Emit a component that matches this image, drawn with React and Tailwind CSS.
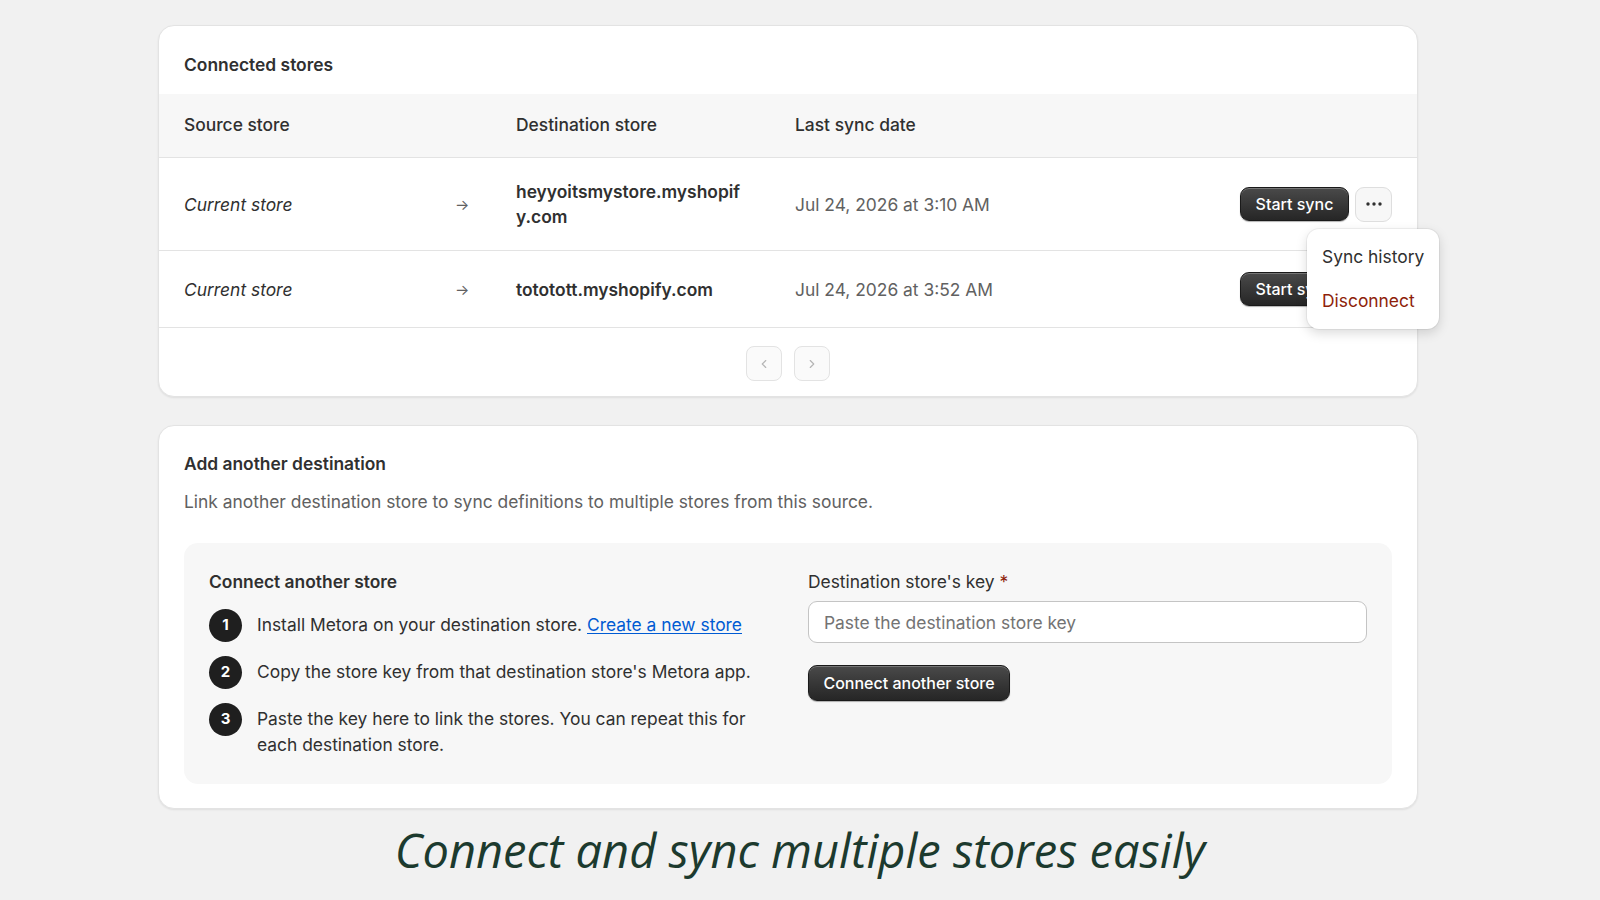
import { ChevronLeft, ChevronRight } from 'lucide-react';

const rows = [
  { dest: 'heyyoitsmystore.myshopify.com', date: 'Jul 24, 2026 at 3:10 AM', menu: true },
  { dest: 'tototott.myshopify.com', date: 'Jul 24, 2026 at 3:52 AM', menu: false },
];

const steps = [
  { n: '1', text: 'Install Metora on your destination store.', link: 'Create a new store' },
  { n: '2', text: "Copy the store key from that destination store's Metora app." },
  { n: '3', text: 'Paste the key here to link the stores. You can repeat this for each destination store.' },
];

function DarkButton({ children, className = '' }) {
  return (
    <button
      className={`relative z-0 rounded-[9px] border border-[#1a1a1a] bg-gradient-to-b from-[#4a4a4a] to-[#262626] text-white font-[550] shadow-[inset_0_1px_0_rgba(255,255,255,0.25),0_1px_1px_rgba(0,0,0,0.3)] ${className}`}>
      {children}
    </button>
  );
}

export default function App() {
  return (
    <div
      className="min-h-screen w-[1600px] h-[900px] overflow-hidden bg-[#f1f1f1] text-[#303030]"
      style={{ fontFamily: 'Inter, "Noto Sans", sans-serif' }}>
      <div className="ml-[158px] w-[1260px] pt-[25px]">
        {/* Connected stores */}
        <div className="rounded-[16px] border border-[#e3e3e3] bg-white shadow-[0_1px_2px_rgba(0,0,0,0.08)]">
          <h2 className="px-[25px] pt-[27px] pb-[17px] text-[17.4px] leading-[24px] font-semibold">Connected stores</h2>

          <div className="grid grid-cols-[256px_76px_279px_1fr] items-center h-[64px] px-[25px] bg-[#f7f7f7] border-b border-[#e3e3e3] text-[17.4px] font-medium">
            <div>Source store</div>
            <div></div>
            <div>Destination store</div>
            <div>Last sync date</div>
          </div>

          {rows.map((row) => (
            <div
              key={row.dest}
              className="grid grid-cols-[256px_76px_279px_1fr_auto] items-center py-[21px] px-[25px] border-b border-[#e3e3e3] text-[17.4px] leading-[25px]">
              <div className="italic">Current store</div>
              <div className="pl-[15px] text-[#616161] text-[15px]">→</div>
              <div className="w-[228px] break-all font-semibold">{row.dest}</div>
              <div className="text-[#616161]">{row.date}</div>
              <div className="flex items-center gap-[6px]">
                <DarkButton className="h-[34px] w-[109px] text-[16px]">Start sync</DarkButton>
                {row.menu ? (
                  <div className="relative">
                    <button className="flex h-[35px] w-[37px] items-center justify-center rounded-[9px] border border-[#dedede] bg-[#f7f7f7]">
                      <svg width="18" height="4" viewBox="0 0 18 4" fill="#303030">
                        <circle cx="3" cy="2" r="1.7" />
                        <circle cx="9" cy="2" r="1.7" />
                        <circle cx="15" cy="2" r="1.7" />
                      </svg>
                    </button>
                    <div className="absolute right-[-47px] top-[42px] z-10 w-[132px] whitespace-nowrap rounded-[12px] bg-white py-[6px] shadow-[0_4px_12px_rgba(0,0,0,0.15),0_0_0_1px_rgba(0,0,0,0.05)]">
                      <div className="px-[15px] py-[9px] text-[17.4px] leading-[26px] text-[#303030]">Sync history</div>
                      <div className="px-[15px] py-[9px] text-[17.4px] leading-[26px] text-[#8e1f0b]">Disconnect</div>
                    </div>
                  </div>
                ) : (
                  <div className="w-[37px]"></div>
                )}
              </div>
            </div>
          ))}

          <div className="flex justify-center gap-[12px] pt-[18px] pb-[15px]">
            <button className="flex h-[35px] w-[36px] items-center justify-center rounded-[8px] border border-[#e3e3e3] bg-[#fafafa] text-[#b5b5b5]">
              <ChevronLeft size={14} strokeWidth={2} />
            </button>
            <button className="flex h-[35px] w-[36px] items-center justify-center rounded-[8px] border border-[#e3e3e3] bg-[#fafafa] text-[#b5b5b5]">
              <ChevronRight size={14} strokeWidth={2} />
            </button>
          </div>
        </div>

        {/* Add another destination */}
        <div className="mt-[28px] rounded-[16px] border border-[#e3e3e3] bg-white px-[25px] pt-[26px] pb-[24px] shadow-[0_1px_2px_rgba(0,0,0,0.08)]">
          <h2 className="text-[17.4px] leading-[24px] font-semibold">Add another destination</h2>
          <p className="mt-[14px] text-[17.4px] leading-[24px] text-[#616161]">
            Link another destination store to sync definitions to multiple stores from this source.
          </p>

          <div className="mt-[29px] grid grid-cols-2 gap-[40px] rounded-[14px] bg-[#f7f7f7] px-[25px] pt-[27px] pb-[26px]">
            <div>
              <h3 className="text-[17.4px] leading-[24px] font-semibold">Connect another store</h3>
              <div className="mt-[15px] flex flex-col gap-[14px]">
                {steps.map((s) => (
                  <div key={s.n} className="flex gap-[15px]">
                    <div className="flex h-[33px] w-[33px] shrink-0 items-center justify-center rounded-full bg-[#1f1f1f] text-[15px] font-bold text-white">
                      {s.n}
                    </div>
                    <p className="pt-[3px] text-[17.4px] leading-[26px] text-[#303030]">
                      {s.text}
                      {s.link && (
                        <>
                          {' '}
                          <a href="#" className="text-[#005bd3] underline underline-offset-2">{s.link}</a>
                        </>
                      )}
                    </p>
                  </div>
                ))}
              </div>
            </div>

            <div>
              <label className="block text-[17.4px] leading-[24px] text-[#303030]">
                Destination store's key <span className="text-[#8e1f0b]">*</span>
              </label>
              <input
                placeholder="Paste the destination store key"
                className="mt-[7px] h-[42px] w-full rounded-[9px] border border-[#c4c4c4] bg-white px-[15px] text-[17.4px] placeholder:text-[#737373] outline-none"
              />
              <DarkButton className="mt-[22px] h-[36px] w-[202px] text-[16px]">Connect another store</DarkButton>
            </div>
          </div>
        </div>
      </div>

      <p
        className="mt-[13px] text-center text-[47px] leading-[56px] italic text-[#1c3a2e]"
        style={{ fontFamily: '"Open Sans", sans-serif' }}>
        Connect and sync multiple stores easily
      </p>
    </div>
  );
}
